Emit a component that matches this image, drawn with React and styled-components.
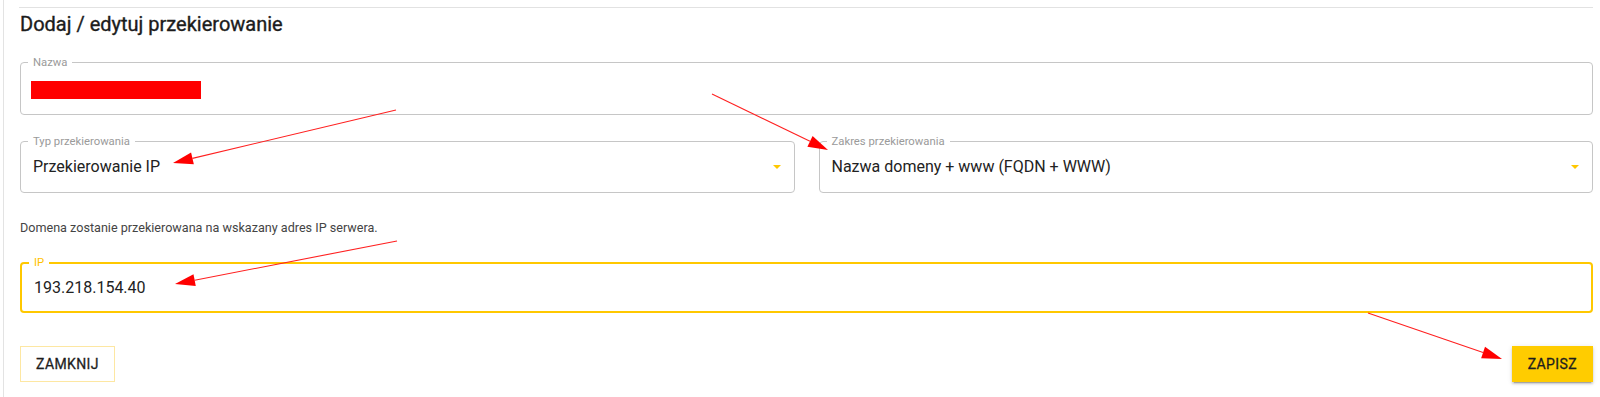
import React from "react";
import styled, { createGlobalStyle } from "styled-components";

const GlobalStyle = createGlobalStyle`
  body {
    margin: 0;
    background: #ffffff;
    font-family: Roboto, "Liberation Sans", Arial, sans-serif;
    color: rgba(0, 0, 0, 0.87);
  }
`;

const Page = styled.div`
  position: relative;
  width: 1600px;
  height: 397px;
  overflow: hidden;
  padding-left: 3px;
  box-sizing: border-box;
`;

const Card = styled.section`
  height: 100%;
  box-sizing: border-box;
  border-left: 1px solid #e3e3e3;
  padding: 7px 7px 0 16px;
`;

const Divider = styled.div`
  height: 1px;
  margin-left: -1px;
  background: #e2e2e2;
`;

// no medium cut of Roboto here, so thicken the regular one a little
const Title = styled.h2`
  margin: 4px 0 0;
  font-size: 20px;
  line-height: 24px;
  font-weight: 400;
  -webkit-text-stroke: 0.35px #1c1c1c;
  color: #1c1c1c;
`;

const Field = styled.fieldset`
  margin: ${({ $top }) => $top}px 0 0;
  padding: 0 7px;
  min-width: 0;
  border: ${({ $focused }) => ($focused ? "2px solid #ffc800" : "1px solid #c6c6c6")};
  border-radius: 4px;
`;

const Legend = styled.legend`
  padding: 0 5px;
  font-size: 11.3px;
  line-height: ${({ $focused }) => ($focused ? 14 : 13)}px;
  color: ${({ $focused }) => ($focused ? "#ffc200" : "#9a9a9a")};
`;

const Content = styled.div`
  height: ${({ $height }) => $height}px;
  box-sizing: border-box;
  padding: ${({ $pad }) => $pad}px 6px 0 5px;
  display: flex;
  align-items: flex-start;
  justify-content: space-between;
  font-size: 16px;
  line-height: 20px;
  color: #222;
`;

const Redacted = styled.div`
  width: 170px;
  height: 18px;
  margin: 3px 0 0 -2px;
  background: #ff0000;
`;

const Caret = styled.span`
  width: 0;
  height: 0;
  margin-top: 8px;
  border-left: 4px solid transparent;
  border-right: 4px solid transparent;
  border-top: 4px solid #ffc800;
`;

const Row = styled.div`
  display: grid;
  grid-template-columns: 1fr 1fr;
  gap: 24px;
  margin-top: 20px;
`;

const Helper = styled.p`
  margin: 27px 0 0;
  font-size: 12.6px;
  line-height: 16px;
  color: #444;
`;

const Actions = styled.div`
  display: flex;
  justify-content: space-between;
  margin-top: 33px;
`;

const Button = styled.button`
  height: 36px;
  box-sizing: border-box;
  padding: 0 ${({ $primary }) => ($primary ? 16 : 15)}px;
  font-family: Roboto, "Liberation Sans", Arial, sans-serif;
  font-size: 14px;
  font-weight: 400;
  -webkit-text-stroke: 0.3px #1e1e1e;
  letter-spacing: 0.4px;
  text-transform: uppercase;
  color: #1e1e1e;
  border-radius: 0;
  cursor: pointer;
  border: ${({ $primary }) => ($primary ? "none" : "1px solid #fde7a2")};
  background: ${({ $primary }) => ($primary ? "#ffcc00" : "#fff")};
  box-shadow: ${({ $primary }) =>
    $primary
      ? "0 3px 1px -2px rgba(0,0,0,0.2), 0 2px 2px 0 rgba(0,0,0,0.14), 0 1px 5px 0 rgba(0,0,0,0.12)"
      : "none"};
`;

const Overlay = styled.svg`
  position: absolute;
  left: 0;
  top: 0;
  pointer-events: none;
`;

const arrows = [
  { from: [396, 110], to: [173, 163] },
  { from: [712, 94], to: [828, 150] },
  { from: [397, 241], to: [175, 284] },
  { from: [1368, 313], to: [1502, 359] },
];

const Arrow = ({ from, to }) => {
  const dx = to[0] - from[0];
  const dy = to[1] - from[1];
  const len = Math.hypot(dx, dy);
  const ux = dx / len;
  const uy = dy / len;
  const bx = to[0] - ux * 20;
  const by = to[1] - uy * 20;
  const head = [
    [to[0], to[1]],
    [bx - uy * 6, by + ux * 6],
    [bx + uy * 6, by - ux * 6],
  ]
    .map((p) => p.join(","))
    .join(" ");
  return (
    <g>
      <line x1={from[0]} y1={from[1]} x2={bx} y2={by} stroke="#ff2020" strokeWidth="1.1" />
      <polygon points={head} fill="#ff0000" />
    </g>
  );
};

const TextField = ({ label, top, height, pad, focused, children }) => (
  <Field $top={top} $focused={focused}>
    <Legend $focused={focused}>{label}</Legend>
    <Content $height={height} $pad={pad}>
      {children}
    </Content>
  </Field>
);

const App = () => (
  <>
    <GlobalStyle />
    <Page>
      <Card>
        <Divider />
        <Title>Dodaj / edytuj przekierowanie</Title>
        <TextField label="Nazwa" top={20} height={45} pad={9}>
          <Redacted />
        </TextField>
        <Row>
          <TextField label="Typ przekierowania" top={0} height={44} pad={9}>
            <span>Przekierowanie IP</span>
            <Caret />
          </TextField>
          <TextField label="Zakres przekierowania" top={0} height={44} pad={9}>
            <span>Nazwa domeny + www (FQDN + WWW)</span>
            <Caret />
          </TextField>
        </Row>
        <Helper>Domena zostanie przekierowana na wskazany adres IP serwera.</Helper>
        <TextField label="IP" top={20} height={41} pad={8} focused>
          <span>193.218.154.40</span>
        </TextField>
        <Actions>
          <Button>Zamknij</Button>
          <Button $primary>Zapisz</Button>
        </Actions>
      </Card>
      <Overlay width="1600" height="397" viewBox="0 0 1600 397">
        {arrows.map((a, i) => (
          <Arrow key={i} {...a} />
        ))}
      </Overlay>
    </Page>
  </>
);

export default App;
